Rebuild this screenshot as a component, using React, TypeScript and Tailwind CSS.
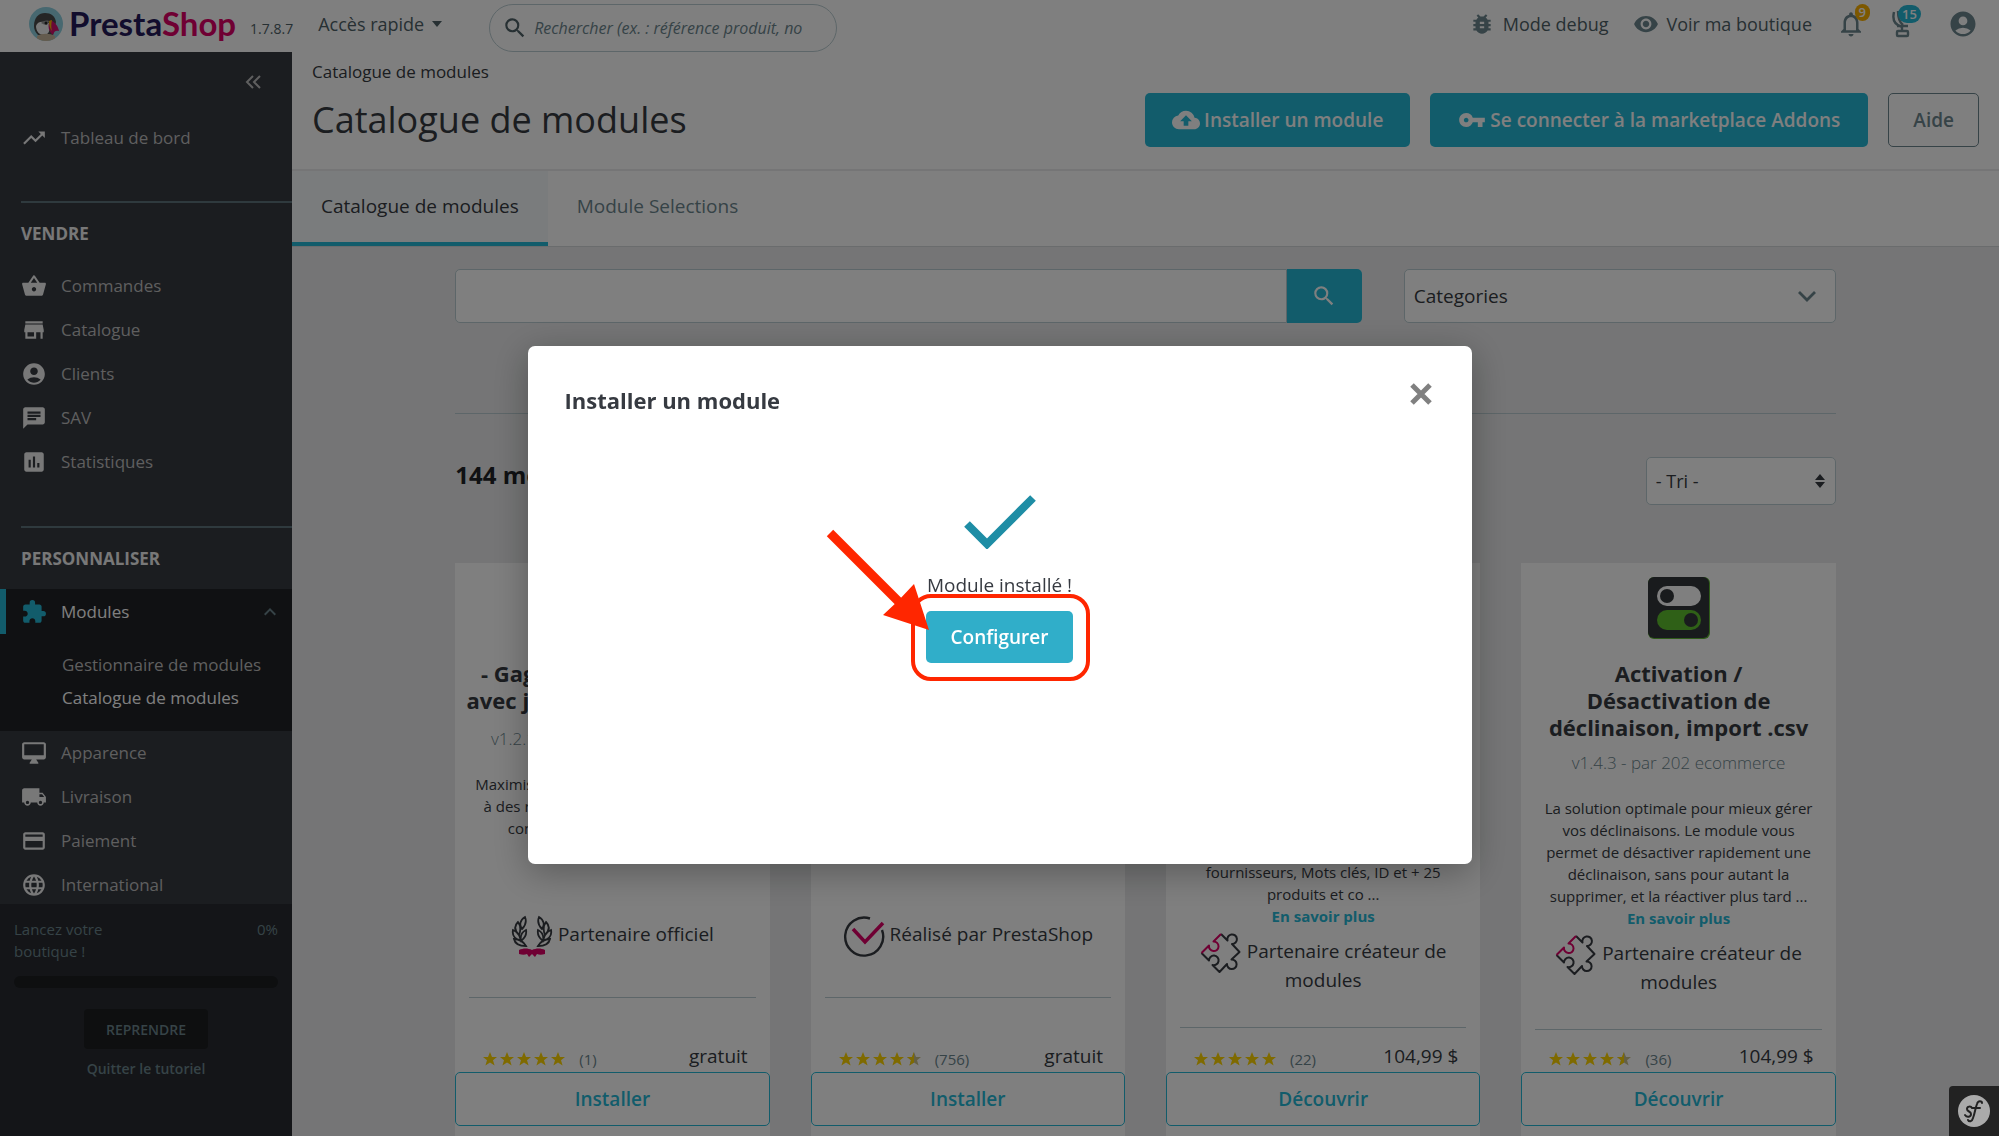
import { useState } from 'react';
import type { ReactNode } from 'react';
import type { IconType } from 'react-icons';
import {
  MdAccountCircle,
  MdAssessment,
  MdBugReport,
  MdChat,
  MdCloudUpload,
  MdExtension,
  MdKeyboardArrowUp,
  MdLanguage,
  MdLocalShipping,
  MdNotificationsNone,
  MdOutlineDesktopMac,
  MdPayment,
  MdRemoveRedEye,
  MdSearch,
  MdShoppingBasket,
  MdStore,
  MdTrendingUp,
  MdVpnKey,
} from 'react-icons/md';

type MenuItem = { label: string; icon: IconType };

const SELL_MENU: MenuItem[] = [
  { label: 'Commandes', icon: MdShoppingBasket },
  { label: 'Catalogue', icon: MdStore },
  { label: 'Clients', icon: MdAccountCircle },
  { label: 'SAV', icon: MdChat },
  { label: 'Statistiques', icon: MdAssessment },
];

const IMPROVE_MENU: MenuItem[] = [
  { label: 'Apparence', icon: MdOutlineDesktopMac },
  { label: 'Livraison', icon: MdLocalShipping },
  { label: 'Paiement', icon: MdPayment },
  { label: 'International', icon: MdLanguage },
];

type Badge = 'official' | 'prestashop' | 'creator';

type ModuleCardData = {
  title: string;
  version: string;
  description: string;
  badge: Badge;
  rating: number;
  votes: number;
  price: string;
  action: string;
};

const BADGE_LABELS: Record<Badge, string> = {
  official: 'Partenaire officiel',
  prestashop: 'Réalisé par PrestaShop',
  creator: 'Partenaire créateur de modules',
};

const MODULES: ModuleCardData[] = [
  {
    title: '- Gagnez de vrais clients\navec jeux, roue et cadeaux',
    version: 'v1.2.1 - par Addons Ecommerce',
    description:
      'Maximisez vos ventes et participez plus\nà des remises pour tous vos visiteurs\nconçues rien que pour vous ...',
    badge: 'official',
    rating: 5,
    votes: 1,
    price: 'gratuit',
    action: 'Installer',
  },
  {
    title: 'Paiement en ligne sécurisé',
    version: 'v4.1.0 - par PrestaShop',
    description: 'Acceptez tous les moyens de paiement sur votre boutique ...',
    badge: 'prestashop',
    rating: 4.5,
    votes: 756,
    price: 'gratuit',
    action: 'Installer',
  },
  {
    title: 'Recherche avancée\npour le back office',
    version: 'v2.0.4 - par Addons',
    description:
      'Recherchez vos produits en un clic\ndepuis la liste du catalogue :\nfiltrez par nom, marque, prix,\nréférence, catégories, stocks,\nfournisseurs, Mots clés, ID et + 25\nproduits et co ...',
    badge: 'creator',
    rating: 5,
    votes: 22,
    price: '104,99 $',
    action: 'Découvrir',
  },
  {
    title: 'Activation /\nDésactivation de\ndéclinaison, import .csv',
    version: 'v1.4.3 - par 202 ecommerce',
    description:
      'La solution optimale pour mieux gérer\nvos déclinaisons. Le module vous\npermet de désactiver rapidement une\ndéclinaison, sans pour autant la\nsupprimer, et la réactiver plus tard ...',
    badge: 'creator',
    rating: 4.5,
    votes: 36,
    price: '104,99 $',
    action: 'Découvrir',
  },
];

function PuffinLogo() {
  return (
    <svg viewBox="0 0 34 34" className="size-[34px] shrink-0" aria-hidden="true">
      <defs>
        <clipPath id="puffin">
          <circle cx="17" cy="17" r="17" />
        </clipPath>
      </defs>
      <g clipPath="url(#puffin)">
        <rect width="34" height="34" fill="#8ed0e0" />
        <path d="M5 19C5 10 10 6 16 6c6 0 10 3 11 9l-3 13H9c-3-3-4-6-4-9z" fill="#4a4a4a" />
        <path d="M7 19c1-4 5-5 9-4 3 0 5 1 5 4 0 5-2 9-6 9-5 0-8-4-8-9z" fill="#f2f2f2" />
        <path d="M12 16c2-2 5-3 8-2l-2 4c-2 0-4-1-6-2z" fill="#999" />
        <circle cx="17" cy="16" r="1.500" fill="#222" />
        <path d="M21 13c5 2 8 6 9 11-3-1-5 0-6 4-4-3-6-9-3-15z" fill="#d3136c" />
        <path d="M20 14l3-1c-1 4-1 8 0 11-2-2-3-6-3-10z" fill="#f0b500" />
        <path d="M8 29c5-3 13-3 18 0v5H8z" fill="#c9b79c" />
      </g>
    </svg>
  );
}

function TrophyIcon() {
  return (
    <svg viewBox="0 0 24 28" className="h-7 w-6" fill="none" stroke="#6c868e" strokeWidth="2.4" aria-hidden="true">
      <path d="M4 2c-2 8 1 13 8 15M8 1c0 7 1 11 5 14M12 16v5M7 16h11" />
      <rect x="7" y="21" width="11" height="5" rx="1" />
    </svg>
  );
}

function BadgeIcon({ badge }: { badge: Badge }) {
  if (badge === 'official') {
    const leaves = (
      <g fill="none" stroke="#363a41" strokeWidth="1.8">
        <path d="M14 2c-5 3-6 8-3 12 3-3 5-7 3-12zM7 7c-4 4-4 8 1 13 2-5 2-9-1-13zM2 15c-1 5 1 9 8 11-1-5-3-9-8-11zM3 24c1 5 5 7 12 7-3-5-7-7-12-7zM15 15c-4 2-6 6-5 11 4-3 6-6 5-11z" />
      </g>
    );
    return (
      <svg viewBox="0 0 42 42" className="-my-2 inline size-[42px] align-middle" aria-hidden="true">
        {leaves}
        <g transform="matrix(-1 0 0 1 42 0)">{leaves}</g>
        <path d="M8 35c4-2 9-2 13 0 4-2 9-2 13 0v4c-3 1-6 1-8 0l-2 3-3-3-3 3-2-3c-2 1-5 1-8 0z" fill="#df0067" />
      </svg>
    );
  }
  if (badge === 'prestashop') {
    return (
      <svg viewBox="0 0 42 42" className="-my-2 inline size-[42px] align-middle" fill="none" aria-hidden="true">
        <path d="M27 3.500A19 19 0 1 0 39 15" stroke="#363a41" strokeWidth="2.400" />
        <path d="M10 14l12 13L40 8" stroke="#df0067" strokeWidth="3.500" />
      </svg>
    );
  }
  return (
    <svg
      viewBox="0 0 42 42"
      className="-my-2 inline size-[42px] align-middle"
      fill="none"
      strokeWidth="2"
      strokeLinejoin="round"
      aria-hidden="true"
    >
      <path
        d="M21 2l6.500 6.500A4.800 4.800 0 1 1 32 12l7.500 8-8 7.500A4.800 4.800 0 1 1 27 32l-7.500 8-7-7A4.800 4.800 0 1 0 9 28.500L1.500 21"
        stroke="#363a41"
      />
      <path d="M1.500 21L9 13.500A4.800 4.800 0 1 0 13.500 9.500L21 2" stroke="#df0067" />
    </svg>
  );
}

const STAR_PATH = 'M7 0l2 5h5l-4 3.200 1.600 5.200L7 10.400l-4.600 3L4 8.200 0 5h5z';

function Stars({ rating }: { rating: number }) {
  return (
    <span className="flex gap-[3px]" role="img" aria-label={`${rating} sur 5`}>
      {[1, 2, 3, 4, 5].map((n) => (
        <svg key={n} viewBox="0 0 14 14" className="size-[14px]" aria-hidden="true">
          <path d={STAR_PATH} fill={rating >= n ? '#ffd500' : '#c9c08a'} />
          {rating < n && <path d="M7 0v10.400l-4.600 3L4 8.200 0 5h5z" fill="#ffd500" />}
        </svg>
      ))}
    </span>
  );
}

function MenuLink({ item }: { item: MenuItem }) {
  const Icon = item.icon;
  return (
    <li>
      <a href="#" className="flex h-11 items-center gap-[14px] pl-[21px] text-[17px] text-[#bebebe]">
        <Icon className="size-[26px] text-[#f0f0f0]" />
        {item.label}
      </a>
    </li>
  );
}

function MenuSection({ title, children }: { title: string; children: ReactNode }) {
  return (
    <section>
      <h2 className="ml-[21px] border-t-2 border-[#5f757c] pt-[19px] pb-[18px] text-[17px] leading-6 font-bold text-[#f0f0f0] uppercase">
        {title}
      </h2>
      {children}
    </section>
  );
}

function Sidebar() {
  return (
    <nav className="flex w-[292px] shrink-0 flex-col bg-[#363a41]">
      <button type="button" className="mt-4 mr-6 self-end p-1" aria-label="Réduire le menu">
        <svg viewBox="0 0 20 20" className="size-5" fill="none" stroke="#bebebe" strokeWidth="2" aria-hidden="true">
          <path d="M9 4l-6 6 6 6M16 4l-6 6 6 6" />
        </svg>
      </button>
      <ul className="mt-5 mb-[41px]">
        <MenuLink item={{ label: 'Tableau de bord', icon: MdTrendingUp }} />
      </ul>
      <MenuSection title="Vendre">
        <ul className="mb-[42px]">
          {SELL_MENU.map((item) => (
            <MenuLink key={item.label} item={item} />
          ))}
        </ul>
      </MenuSection>
      <MenuSection title="Personnaliser">
        <ul className="h-[315px]">
          <li className="bg-[#202226] pb-[17px]">
            <a
              href="#"
              className="flex h-[45px] items-center gap-[14px] border-l-[6px] border-[#25b9d7] pr-[10px] pl-[15px] text-[17px] text-white"
            >
              <MdExtension className="size-[26px] text-[#25b9d7]" />
              <span className="flex-1">Modules</span>
              <MdKeyboardArrowUp className="size-6 text-[#6c868e]" />
            </a>
            <ul className="pt-[14px] pl-[62px] text-[17px] leading-[33px]">
              <li>
                <a href="#" className="text-[#bebebe]">Gestionnaire de modules</a>
              </li>
              <li>
                <a href="#" className="text-white">Catalogue de modules</a>
              </li>
            </ul>
          </li>
          {IMPROVE_MENU.map((item) => (
            <MenuLink key={item.label} item={item} />
          ))}
        </ul>
      </MenuSection>
      <div className="flex flex-1 flex-col items-center bg-[#282b30] px-[14px] pt-[14px] text-[#6c868e]">
        <div className="flex w-full justify-between text-[15px] leading-[22px]">
          <p className="w-28">Lancez votre boutique !</p>
          <span>0%</span>
        </div>
        <div className="mt-[14px] h-3 w-full rounded-full bg-[#1c1e21]" />
        <button type="button" className="mt-[21px] h-10 w-[124px] rounded bg-[#1c1e21] text-[14px] font-semibold">
          REPRENDRE
        </button>
        <button type="button" className="mt-2 text-[14px] leading-6 font-semibold">
          Quitter le tutoriel
        </button>
      </div>
    </nav>
  );
}

function Header() {
  return (
    <header className="flex h-[52px] shrink-0 items-start bg-white text-[18px] text-[#4e6167]">
      <div className="flex h-12 items-center pl-[29px]">
        <PuffinLogo />
        <span className="ml-[6px] font-['Lato'] text-[33px] font-bold text-[#251b5b]">
          Presta<span className="text-[#df0067]">Shop</span>
        </span>
        <span className="mt-2 ml-[14px] text-[14px]">1.7.8.7</span>
      </div>
      <button type="button" className="ml-[25px] flex h-12 items-center gap-2">
        Accès rapide
        <svg viewBox="0 0 10 6" className="h-[6px] w-[10px]" fill="currentColor" aria-hidden="true">
          <path d="M0 0h10L5 6z" />
        </svg>
      </button>
      <label className="mt-1 ml-[47px] flex h-12 w-[348px] items-center gap-1 rounded-full border border-[#bbcdd2] pr-4 pl-3">
        <MdSearch className="size-[26px] shrink-0 text-[#4e6167]" />
        <span className="sr-only">Rechercher</span>
        <input
          type="text"
          placeholder="Rechercher (ex. : référence produit, no"
          className="h-full min-w-0 flex-1 pl-[2px] text-[16px] italic outline-none placeholder:text-[#6c868e]"
        />
      </label>
      <div className="ml-auto flex h-12 items-center pr-[21px]">
        <a href="#" className="flex items-center gap-2">
          <MdBugReport className="size-[26px] text-[#6c868e]" />
          Mode debug
        </a>
        <a href="#" className="ml-6 flex items-center gap-2">
          <MdRemoveRedEye className="size-[26px] text-[#6c868e]" />
          Voir ma boutique
        </a>
        <button type="button" className="relative ml-6" aria-label="Notifications">
          <MdNotificationsNone className="size-[30px] text-[#6c868e]" />
          <span className="absolute -top-[5px] -right-1 rounded-full bg-[#fab000] px-1 text-[13px] leading-[17px] font-semibold text-white">
            9
          </span>
        </button>
        <button type="button" className="relative ml-6" aria-label="Progression">
          <TrophyIcon />
          <span className="absolute -top-[5px] left-2 rounded-full bg-[#25b9d7] px-1 text-[13px] leading-[18px] font-semibold text-white">
            15
          </span>
        </button>
        <button type="button" className="ml-[34px]" aria-label="Compte">
          <MdAccountCircle className="size-[30px] text-[#6c868e]" />
        </button>
      </div>
    </header>
  );
}

function PageHead() {
  return (
    <div className="bg-white">
      <div className="flex h-[119px] flex-col border-b-2 border-[#eaebec] px-5 pt-2 text-[#363a41]">
        <a href="#" className="text-[17px] leading-6">Catalogue de modules</a>
        <div className="mt-[9px] flex h-[54px] items-center text-[19px] font-semibold">
          <h1 className="flex-1 text-[36px] font-normal">Catalogue de modules</h1>
          <button type="button" className="flex h-[54px] items-center gap-1 rounded-[5px] bg-[#25b9d7] px-[27px] text-white">
            <MdCloudUpload className="size-7" />
            Installer un module
          </button>
          <button
            type="button"
            className="ml-5 flex h-[54px] items-center gap-1 rounded-[5px] bg-[#25b9d7] px-7 text-white"
          >
            <MdVpnKey className="size-7" />
            Se connecter à la marketplace Addons
          </button>
          <button
            type="button"
            className="ml-5 h-[54px] rounded-[5px] border border-[#6c868e] px-6 text-[#6c868e]"
          >
            Aide
          </button>
        </div>
      </div>
      <div className="flex h-[76px] border-b border-[#d5d9db] text-[19px]">
        <a
          href="#"
          className="flex items-center border-b-4 border-[#25b9d7] bg-[#f4f8fb] px-[29px] text-[#363a41]"
        >
          Catalogue de modules
        </a>
        <a href="#" className="flex items-center border-b-4 border-transparent px-[29px] text-[#6c868e]">
          Module Selections
        </a>
      </div>
    </div>
  );
}

function ModuleCard({ module }: { module: ModuleCardData }) {
  return (
    <article className="flex h-[620px] flex-col bg-white text-center text-[#363a41]">
      <div className="flex h-[509px] flex-col px-[14px] pt-[14px]">
        <div className="min-h-[333px]">
          <svg viewBox="0 0 62 62" className="mx-auto size-[62px]" aria-hidden="true">
            <rect width="62" height="62" rx="6" fill="#5cb531" />
            <rect width="61" height="61" rx="6" fill="#33373b" />
            <rect x="9" y="9" width="44" height="20" rx="10" fill="#fff" />
            <rect x="9" y="33" width="44" height="20" rx="10" fill="#5fc02f" />
            <circle cx="19" cy="19" r="7" fill="#33373b" />
            <circle cx="43" cy="43" r="7" fill="#33373b" />
          </svg>
          <h3 className="-mx-[14px] mt-[21px] min-h-[57px] text-[22px] leading-[27px] font-bold whitespace-pre-line">
            {module.title}
          </h3>
          <p className="mt-2 text-[17px] leading-7 font-light text-[#6c868e]">{module.version}</p>
          <p className="mt-5 text-[15px] leading-[22px] whitespace-pre-line">
            {module.description}
            <br />
            <a href="#" className="font-bold text-[#25b9d7]">En savoir plus</a>
          </p>
        </div>
        <p className="mb-[33px] min-h-[54px] px-2 pt-[10px] text-[19px] leading-7">
          <BadgeIcon badge={module.badge} /> {BADGE_LABELS[module.badge]}
        </p>
        <div className="flex flex-1 items-end justify-between border-t border-[#bbcdd2] pr-2 pl-[14px] pb-1">
          <div className="flex items-center gap-[14px] text-[15px] leading-[18px] text-[#6c868e]">
            <Stars rating={module.rating} />
            ({module.votes})
          </div>
          <span className="text-[19px] leading-6">{module.price}</span>
        </div>
      </div>
      <button
        type="button"
        className="h-[54px] rounded-[5px] border border-[#25b9d7] bg-white text-[19px] font-semibold text-[#25b9d7]"
      >
        {module.action}
      </button>
    </article>
  );
}

function Catalog() {
  return (
    <main className="mx-auto w-10/12 px-[21px] pt-[22px]">
      <div className="flex gap-[42px] border-b border-[#bbcdd2] pb-[90px]">
        <form className="flex h-[54px] flex-1">
          <input
            type="search"
            aria-label="Rechercher un module"
            className="min-w-0 flex-1 rounded-l-[5px] border border-[#bbcdd2] bg-white px-3 text-[19px] outline-none"
          />
          <button
            type="button"
            aria-label="Rechercher"
            className="flex w-[75px] items-center justify-center rounded-r-[5px] bg-[#25b9d7] text-white"
          >
            <MdSearch className="size-[26px]" />
          </button>
        </form>
        <button
          type="button"
          className="flex h-[54px] w-[432px] items-center justify-between rounded-[5px] border border-[#bbcdd2] bg-white pr-[19px] pl-[9px] text-[19px] text-[#363a41]"
        >
          Categories
          <svg viewBox="0 0 18 11" className="h-[11px] w-[18px]" fill="none" stroke="#6c868e" strokeWidth="2.800" aria-hidden="true">
            <path d="M1 1l8 8 8-8" />
          </svg>
        </button>
      </div>
      <div className="mt-[43px] mb-[58px] flex justify-between">
        <h2 className="pt-[2px] text-[24px] leading-8 font-bold text-[#202226]">144 modules et services</h2>
        <div className="relative">
          <select
            aria-label="Tri"
            className="h-12 w-[190px] appearance-none rounded-[5px] border border-[#bbcdd2] bg-white px-[9px] text-[18px] text-[#363a41]"
          >
            <option>- Tri -</option>
          </select>
          <svg viewBox="0 0 10 14" className="absolute top-[17px] right-[11px] h-[14px] w-[10px]" fill="#363a41" aria-hidden="true">
            <path d="M5 0l5 6H0zM5 14l5-6H0z" />
          </svg>
        </div>
      </div>
      <div className="grid grid-cols-4 gap-[41px]">
        {MODULES.map((module) => (
          <ModuleCard key={module.title} module={module} />
        ))}
      </div>
    </main>
  );
}

function InstallModal({ onClose }: { onClose: () => void }) {
  return (
    <div className="fixed inset-0 z-10 flex items-start justify-center bg-black/50 pt-[346px]">
      <div
        role="dialog"
        aria-modal="true"
        aria-labelledby="install-title"
        className="h-[518px] w-[944px] rounded-[7px] bg-white px-[37px] pt-[34px] shadow-[0_8px_36px_rgba(0,0,0,0.3)]"
      >
        <div className="flex items-start justify-between">
          <h2 id="install-title" className="pt-1 text-[22px] leading-8 font-bold text-[#363a41]">
            Installer un module
          </h2>
          <button type="button" onClick={onClose} aria-label="Fermer">
            <svg viewBox="0 0 28 28" className="size-7" fill="none" stroke="#808080" strokeWidth="5" aria-hidden="true">
              <path d="M5 5l18 18M23 5L5 23" />
            </svg>
          </button>
        </div>
        <div className="mt-[79px] flex flex-col items-center">
          <svg viewBox="0 0 72 54" className="h-[54px] w-[72px]" fill="none" stroke="#1e8da5" strokeWidth="8" aria-hidden="true">
            <path d="M3 29l20 20L69 3" />
          </svg>
          <p className="mt-[22px] text-[19px] leading-7 text-[#363a41]">Module installé !</p>
          <div className="relative mt-3">
            <button
              type="button"
              className="h-[52px] rounded-[5px] bg-[#30aec9] px-[25px] text-[19px] font-semibold text-white"
            >
              Configurer
            </button>
            {/* Annotation: frame and arrow around the button */}
            <svg
              viewBox="0 0 266 154"
              className="pointer-events-none absolute -top-[82px] -left-[101px] h-[154px] w-[266px]"
              fill="none"
              aria-hidden="true"
            >
              <rect x="88" y="67" width="175" height="83" rx="18" stroke="#ff2600" strokeWidth="4" />
              <path d="M5 4l80 80" stroke="#ff2600" strokeWidth="9" />
              <path d="M104 101L58 86l15-14 16-17z" fill="#ff2600" />
            </svg>
          </div>
        </div>
      </div>
    </div>
  );
}

export default function App() {
  const [modalOpen, setModalOpen] = useState(true);

  return (
    <div className="flex h-screen flex-col overflow-hidden bg-[#eaebec] font-['Open_Sans',sans-serif]">
      <Header />
      <div className="flex min-h-0 flex-1">
        <Sidebar />
        <div className="min-w-0 flex-1 overflow-hidden">
          <PageHead />
          <Catalog />
        </div>
      </div>
      {modalOpen && <InstallModal onClose={() => setModalOpen(false)} />}
      {/* Symfony debug toolbar */}
      <button
        type="button"
        aria-label="Barre de débogage"
        className="fixed right-0 bottom-0 z-20 flex size-[50px] items-center justify-center rounded-tl bg-[#222]"
      >
        <svg viewBox="0 0 32 32" className="size-8" fill="none" aria-hidden="true">
          <circle cx="16" cy="16" r="16" fill="#aaa" />
          <path
            d="M14 13c-1-2-5-2-5 1 0 3 4 2 4 5s-4 4-6 1M24 8c0-2-4-3-5 1-2 5-2 9-4 14-1 4-4 4-5 2M15 13h7"
            stroke="#222"
            strokeWidth="2"
            strokeLinecap="round"
          />
        </svg>
      </button>
    </div>
  );
}
